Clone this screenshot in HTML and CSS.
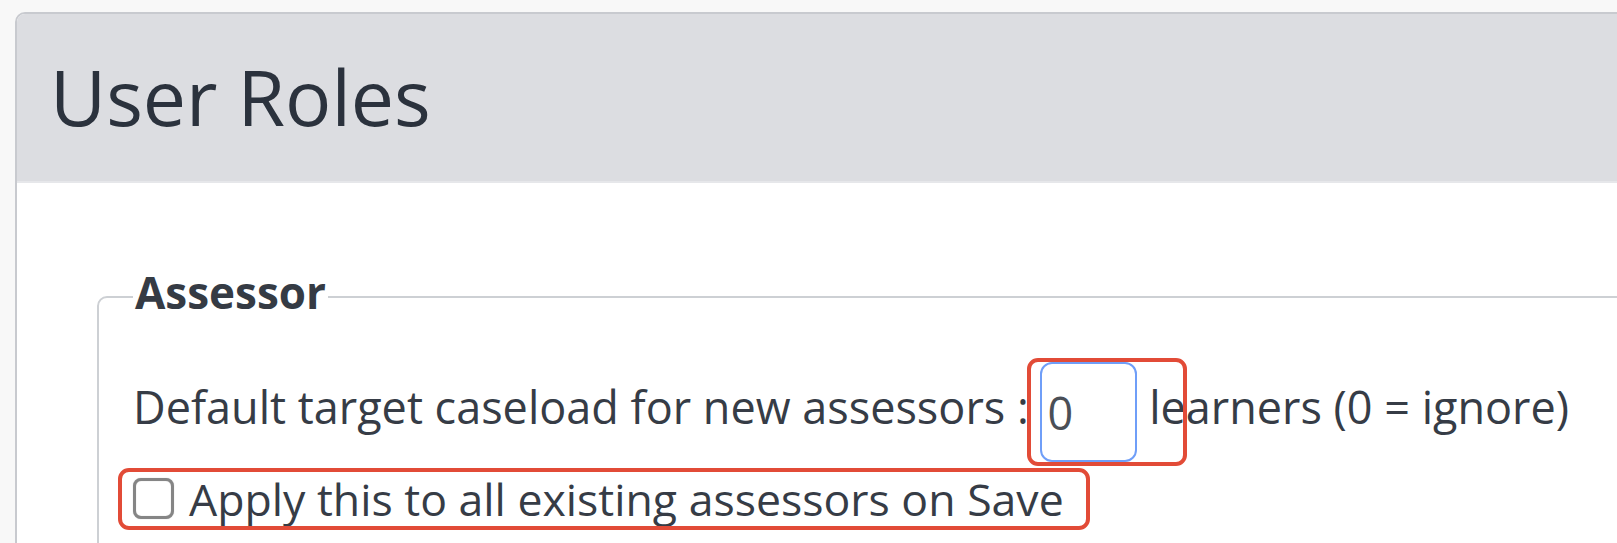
FILE: index.html
```html
<!DOCTYPE html>
<html lang="en">
<head>
<meta charset="utf-8">
<title>User Roles</title>
<link rel="stylesheet" href="styles.css">
</head>
<body>
<div class="page">
  <div class="card">
    <div class="card-header">
      <h1 class="title">User Roles</h1>
    </div>
    <div class="card-body">
      <fieldset class="group">
        <legend class="group-legend">Assessor</legend>
        <div class="line line-first">Default target caseload for new assessors : <span class="mark mark-input"><input class="num" type="text" value="0"></span> learners (0 = ignore)</div>
        <div class="line line-check">
          <label class="check mark mark-check"><input class="box" type="checkbox"><span>Apply this to all existing assessors on Save</span></label>
        </div>
      </fieldset>
    </div>
  </div>
</div>
</body>
</html>
```

FILE: styles.css
```css
html, body {
  margin: 0;
  padding: 0;
  background: #f8f8f8;
  overflow: hidden;
  height: 543px;
}

.page {
  padding: 12px 0 0 15px;
  font-family: "Open Sans", "Noto Sans", "Liberation Sans", sans-serif;
  color: #363c46;
}

.card {
  width: 1720px;
  height: 560px;
  background: #ffffff;
  border: 2px solid #c8cacf;
  border-radius: 10px;
  overflow: hidden;
}

.card-header {
  background: #dcdde1;
  border-bottom: 2px solid #e6e7ea;
  padding: 31px 28px 32px 33px;
}

.title {
  margin: 0;
  font-size: 77px;
  font-weight: 400;
  line-height: 104px;
  color: #2b323d;
}

.card-body {
  padding: 79px 80px 0 80px;
}

.group {
  margin: 0;
  padding: 0 0 20px 34px;
  border: 2px solid #cdd0d4;
  border-radius: 10px;
  min-width: 0;
}

.group-legend {
  padding: 0 2px 10px;
  font-size: 44px;
  font-weight: 700;
  line-height: 60px;
  color: #353b44;
}

.line {
  font-size: 45px;
  line-height: 61px;
  white-space: nowrap;
}

.line-first {
  margin-top: 30px;
}

.line-check {
  margin-top: 6px;
}

.mark {
  position: relative;
  display: inline-block;
}

.mark::after {
  content: "";
  position: absolute;
  border: 4px solid #e24b37;
  border-radius: 11px;
  pointer-events: none;
}

.mark-input::after {
  top: -4px;
  bottom: -4px;
  left: -13px;
  right: -50px;
}

.mark-check::after {
  top: 0;
  bottom: -1px;
  left: -15px;
  right: -26px;
}

.num {
  box-sizing: border-box;
  width: 97px;
  height: 100px;
  padding: 0 5px;
  margin: 0;
  vertical-align: middle;
  font-family: inherit;
  font-size: 45px;
  color: #4a4f57;
  background: #ffffff;
  border: 2px solid #6f9ef8;
  border-radius: 12px;
  outline: none;
}

.check {
  display: inline-flex;
  align-items: center;
  height: 61px;
  font-size: 44.6px;
}

.box {
  appearance: none;
  -webkit-appearance: none;
  width: 41px;
  height: 41px;
  margin: 0 15px 0 0;
  border: 3px solid #858585;
  border-radius: 8px;
  background: #ffffff;
  box-shadow: inset 0 0 1px rgba(0,0,0,0.3), 0 0 1px rgba(0,0,0,0.3);
  flex: none;
}
```
